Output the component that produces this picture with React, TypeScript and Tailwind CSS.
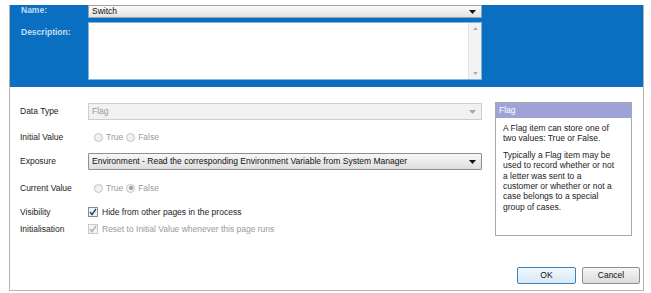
import React from "react";

const font = { fontFamily: '"Liberation Sans", Arial, sans-serif' };

function Arrow({ gray }: { gray?: boolean }) {
  return (
    <svg width="7" height="4" viewBox="0 0 7 4" className="shrink-0">
      <path d="M0 0 L7 0 L3.5 4 Z" fill={gray ? "#a8a8a8" : "#111"} />
    </svg>
  );
}

function Radio({ checked, label }: { checked?: boolean; label: string }) {
  return (
    <div className="flex items-center gap-[3px]">
      <div className="w-[9px] h-[9px] rounded-full border border-[#c4c4c4] bg-[#f2f2f2] flex items-center justify-center">
        {checked && <div className="w-[4px] h-[4px] rounded-full bg-[#9a9a9a]" />}
      </div>
      <span className="text-[#9a9a9a]">{label}</span>
    </div>
  );
}

function Check({ disabled, label }: { disabled?: boolean; label: string }) {
  return (
    <div className="flex items-center gap-[4px]">
      <div
        className={
          "w-[10px] h-[10px] border flex items-center justify-center " +
          (disabled ? "border-[#c8c8c8] bg-[#f4f4f4]" : "border-[#8a8a8a] bg-[#eef3fa]")
        }
      >
        <svg width="8" height="8" viewBox="0 0 8 8">
          <path
            d="M1 4 L3 6.5 L7 1"
            fill="none"
            stroke={disabled ? "#b0b0b0" : "#2a3f7a"}
            strokeWidth="1.4"
          />
        </svg>
      </div>
      <span className={disabled ? "text-[#9a9a9a]" : "text-[#222]"}>{label}</span>
    </div>
  );
}

export default function App() {
  return (
    <div className="w-[651px] h-[293px] bg-white overflow-hidden text-[8.5px] text-[#222]" style={font}>
      <div className="ml-[9px] mt-[5px] w-[635px] h-[286px] border-l border-r border-b border-[#b4b4b4] flex flex-col">
        {/* Blue header */}
        <div className="h-[82px] bg-[#0a6fc0] flex flex-col pl-[11px]">
          <div className="flex items-center h-[13px]">
            <div className="w-[67px] text-[#c4ddf3] font-semibold text-[8.5px] -mt-[2px]">Name:</div>
            <div className="w-[394px] h-[13px] border border-[#9aa4b0] bg-gradient-to-b from-[#fbfbfb] to-[#e2e2e2] flex items-center justify-between pl-[3px] pr-[5px]">
              <span className="text-[#111]">Switch</span>
              <Arrow />
            </div>
          </div>
          <div className="flex mt-[4px]">
            <div className="w-[67px] text-[#c4ddf3] font-semibold pt-[4px]">Description:</div>
            <div className="w-[394px] h-[58px] bg-white border border-[#7fb3e0] flex justify-end">
              <div className="w-[13px] h-full bg-[#f3f3f3] border-l border-[#e6e6e6] flex flex-col items-center justify-between py-[4px]">
                <svg width="5" height="3" viewBox="0 0 5 3">
                  <path d="M0 3 L5 3 L2.5 0 Z" fill="#b0b0b0" />
                </svg>
                <svg width="5" height="3" viewBox="0 0 5 3">
                  <path d="M0 0 L5 0 L2.5 3 Z" fill="#b0b0b0" />
                </svg>
              </div>
            </div>
          </div>
        </div>

        {/* Body */}
        <div className="flex flex-1">
          <div className="flex flex-col pl-[10px] pt-[16px] w-[485px]">
            <div className="flex items-center h-[17px]">
              <div className="w-[68px]">Data Type</div>
              <div className="w-[394px] h-[17px] border border-[#cdcdcd] bg-[#f1f1f1] flex items-center justify-between pl-[3px] pr-[5px]">
                <span className="text-[#999]">Flag</span>
                <Arrow gray />
              </div>
            </div>
            <div className="flex items-center h-[16px] mt-[9px]">
              <div className="w-[74px]">Initial Value</div>
              <div className="flex gap-[3px]">
                <Radio label="True" />
                <Radio label="False" />
              </div>
            </div>
            <div className="flex items-center h-[17px] mt-[8px]">
              <div className="w-[68px]">Exposure</div>
              <div className="w-[394px] h-[17px] border border-[#8e8e8e] rounded-[1px] bg-gradient-to-b from-[#f8f8f8] to-[#dedede] flex items-center justify-between pl-[3px] pr-[5px]">
                <span className="text-[#111]">Environment - Read the corresponding Environment Variable from System Manager</span>
                <Arrow />
              </div>
            </div>
            <div className="flex items-center h-[16px] mt-[10px]">
              <div className="w-[74px]">Current Value</div>
              <div className="flex gap-[3px]">
                <Radio label="True" />
                <Radio label="False" checked />
              </div>
            </div>
            <div className="flex items-center h-[16px] mt-[8px]">
              <div className="w-[68px]">Visibility</div>
              <Check label="Hide from other pages in the process" />
            </div>
            <div className="flex items-center h-[16px] mt-[1px]">
              <div className="w-[68px]">Initialisation</div>
              <Check disabled label="Reset to Initial Value whenever this page runs" />
            </div>
          </div>

          <div className="flex flex-col flex-1">
            <div className="mt-[15px] w-[137px] h-[134px] border border-[#a8a8a8] flex flex-col">
              <div className="h-[15px] bg-[#9ea2d6] text-white pl-[3px] flex items-center">Flag</div>
              <div className="pl-[7px] pt-[5px] leading-[10.4px] text-[#222]">
                <div>A Flag item can store one of</div>
                <div>two values: True or False.</div>
                <div className="mt-[6px]">Typically a Flag item may be</div>
                <div>used to record whether or not</div>
                <div>a letter was sent to a</div>
                <div>customer or whether or not a</div>
                <div>case belongs to a special</div>
                <div>group of cases.</div>
              </div>
            </div>
            <div className="flex gap-[6px] mt-[31px] ml-[22px]">
              <div className="w-[59px] h-[17px] border border-[#3c82b8] rounded-[2px] bg-gradient-to-b from-[#f2f8fd] to-[#d6e8f6] flex items-center justify-center text-[#111]">
                OK
              </div>
              <div className="w-[58px] h-[17px] border border-[#8e8e8e] rounded-[2px] bg-gradient-to-b from-[#f6f6f6] to-[#dcdcdc] flex items-center justify-center text-[#111]">
                Cancel
              </div>
            </div>
          </div>
        </div>
      </div>
    </div>
  );
}
